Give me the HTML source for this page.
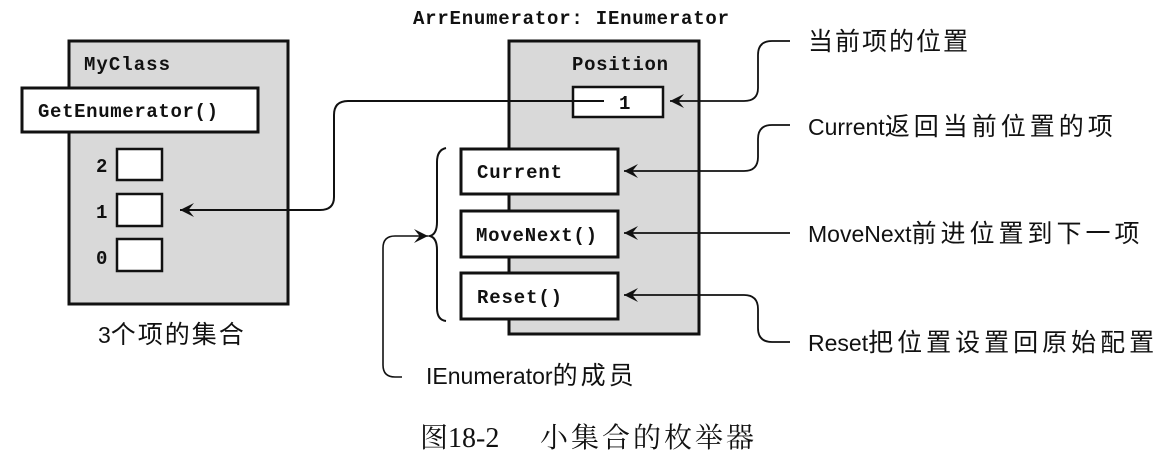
<!DOCTYPE html>
<html><head><meta charset="utf-8"><style>
html,body{margin:0;padding:0;background:#fff;}
svg{display:block}
.m{font-family:"Liberation Mono",monospace;font-weight:bold;font-size:19px;fill:#111}
.c{font-family:"Liberation Sans","Noto Sans CJK SC",sans-serif;font-size:25px;fill:#111}
.l{font-family:"Liberation Sans",sans-serif;font-size:23px;letter-spacing:0}
.s{font-family:"Liberation Serif","Noto Serif CJK SC",serif;font-size:28px;fill:#111}
</style></head><body>
<svg width="1167" height="461" viewBox="0 0 1167 461" xmlns="http://www.w3.org/2000/svg">
<defs>
<marker id="a" viewBox="0 0 10 10" refX="10" refY="5" markerWidth="14" markerHeight="14" markerUnits="userSpaceOnUse" orient="auto"><path d="M10,5 L0,0 L4,5 L0,10 Z" fill="#111"/></marker>
</defs>
<rect x="69" y="41" width="219" height="263" fill="#d9d9d9" stroke="#111" stroke-width="3"/>
<text class="m" x="84" y="70" textLength="86">MyClass</text>
<rect x="22" y="88" width="236" height="44" fill="#fff" stroke="#111" stroke-width="3"/>
<text class="m" x="38" y="117" textLength="180">GetEnumerator()</text>
<rect x="117" y="149" width="45" height="31" fill="#fff" stroke="#111" stroke-width="2.5"/>
<rect x="117" y="194" width="45" height="32" fill="#fff" stroke="#111" stroke-width="2.5"/>
<rect x="117" y="239" width="45" height="32" fill="#fff" stroke="#111" stroke-width="2.5"/>
<text class="m" x="96" y="172">2</text>
<text class="m" x="96" y="218">1</text>
<text class="m" x="96" y="264">0</text>
<text class="c" x="98" y="343"><tspan class="l">3</tspan><tspan style="letter-spacing:2px">个项的集合</tspan></text>
<text class="m" x="413" y="24" textLength="316">ArrEnumerator: IEnumerator</text>
<rect x="509" y="41" width="190" height="293" fill="#d9d9d9" stroke="#111" stroke-width="3"/>
<text class="m" x="572" y="70" textLength="96">Position</text>
<rect x="573" y="87" width="90" height="30" fill="#fff" stroke="#111" stroke-width="2.5"/>
<text class="m" x="619" y="109">1</text>
<rect x="461" y="149" width="157" height="45" fill="#fff" stroke="#111" stroke-width="3"/>
<text class="m" x="477" y="178" textLength="85">Current</text>
<rect x="461" y="211" width="157" height="46" fill="#fff" stroke="#111" stroke-width="3"/>
<text class="m" x="476" y="241" textLength="121">MoveNext()</text>
<rect x="461" y="273" width="157" height="46" fill="#fff" stroke="#111" stroke-width="3"/>
<text class="m" x="477" y="303" textLength="85">Reset()</text>
<path d="M446,148 Q437,150 437,162 L437,222 Q437,234 430,236 Q437,238 437,250 L437,308 Q437,320 446,321" fill="none" stroke="#111" stroke-width="2"/>
<path d="M604,101 L348,101 Q334,101 334,115 L334,197 Q334,210 320,210 L180,210" fill="none" stroke="#111" stroke-width="2" marker-end="url(#a)"/>
<path d="M402,377 L395,377 Q383,377 383,365 L383,248 Q383,236 395,236 L428,236" fill="none" stroke="#111" stroke-width="1.6" marker-end="url(#a)"/>
<text class="c" x="426" y="384"><tspan class="l">IEnumerator</tspan><tspan style="letter-spacing:3px">的成员</tspan></text>
<path d="M790,41 L772,41 Q758,41 758,55 L758,88 Q758,101 744,101 L670,101" fill="none" stroke="#111" stroke-width="1.8" marker-end="url(#a)"/>
<path d="M790,125 L772,125 Q758,125 758,139 L758,157 Q758,171 744,171 L624,171" fill="none" stroke="#111" stroke-width="1.8" marker-end="url(#a)"/>
<path d="M790,233 L624,233" fill="none" stroke="#111" stroke-width="1.8" marker-end="url(#a)"/>
<path d="M790,342 L772,342 Q758,342 758,328 L758,309 Q758,295 744,295 L624,295" fill="none" stroke="#111" stroke-width="1.8" marker-end="url(#a)"/>
<text class="c" x="808" y="50" style="letter-spacing:2px">当前项的位置</text>
<text class="c" x="808" y="135"><tspan class="l">Current</tspan><tspan style="letter-spacing:4px">返回当前位置的项</tspan></text>
<text class="c" x="808" y="242"><tspan class="l">MoveNext</tspan><tspan style="letter-spacing:4px">前进位置到下一项</tspan></text>
<text class="c" x="808" y="351"><tspan class="l">Reset</tspan><tspan style="letter-spacing:4px">把位置设置回原始配置</tspan></text>
<text class="s" x="420" y="447">图18-2</text>
<text class="s" x="540" y="447" style="letter-spacing:3px">小集合的枚举器</text>
</svg>
</body></html>
